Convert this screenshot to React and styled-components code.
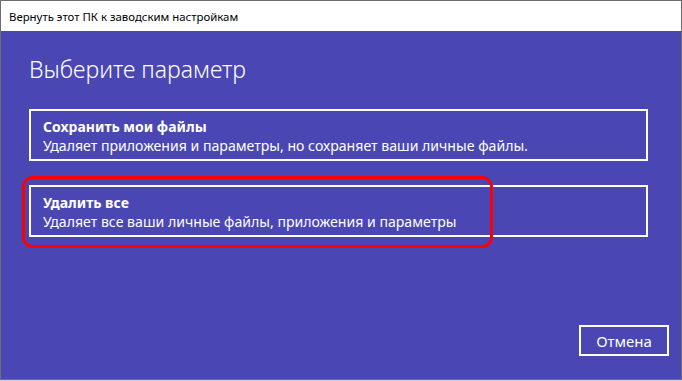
import React from "react";
import styled, { createGlobalStyle } from "styled-components";

const Global = createGlobalStyle`
  html, body { margin: 0; padding: 0; background: #d4d4d4; }
  body { font-family: "Segoe UI", "Noto Sans", "Open Sans", sans-serif; }
`;

const Window = styled.div`
  width: 682px;
  height: 380px;
  box-sizing: border-box;
  border: 1px solid #6f6f6f;
  display: flex;
  flex-direction: column;
  background: #4a47b5;
`;

const TitleBar = styled.div`
  height: 30px;
  flex: none;
  background: #ffffff;
  display: flex;
  align-items: center;
  padding-left: 8px;
  font-size: 11.4px;
  color: #000;
`;

const Content = styled.div`
  flex: 1;
  display: flex;
  flex-direction: column;
  padding: 0 12px 23px 28px;
  color: #fff;
`;

const Heading = styled.h1`
  margin: 22px 0 24px 0;
  font-size: 23px;
  font-weight: 300;
  line-height: 32px;
`;

const Options = styled.div`
  display: flex;
  flex-direction: column;
  gap: 24px;
  margin-right: 21px;
`;

const OptionWrap = styled.div`
  position: relative;
`;

const Option = styled.div`
  height: 52px;
  box-sizing: border-box;
  border: 2px solid #fff;
  padding: 6px 12px 0;
  display: flex;
  flex-direction: column;
`;

const OptionTitle = styled.div`
  font-size: 14px;
  font-weight: 700;
  line-height: 19px;
`;

const OptionDesc = styled.div`
  font-size: 14.1px;
  line-height: 20px;
`;

const Highlight = styled.div`
  position: absolute;
  left: -7px;
  top: -9px;
  width: 471px;
  height: 72px;
  box-sizing: border-box;
  border: 3px solid #ff0000;
  border-radius: 11px;
  pointer-events: none;
`;

const Footer = styled.div`
  margin-top: auto;
  display: flex;
  justify-content: flex-end;
`;

const Button = styled.button`
  width: 90px;
  height: 31px;
  box-sizing: border-box;
  border: 2px solid #fff;
  background: transparent;
  color: #fff;
  font-family: inherit;
  font-size: 15px;
  padding: 0;
`;

export default function App() {
  return (
    <>
      <Global />
      <Window>
        <TitleBar>Вернуть этот ПК к заводским настройкам</TitleBar>
        <Content>
          <Heading>Выберите параметр</Heading>
          <Options>
            <OptionWrap>
              <Option>
                <OptionTitle>Сохранить мои файлы</OptionTitle>
                <OptionDesc>Удаляет приложения и параметры, но сохраняет ваши личные файлы.</OptionDesc>
              </Option>
            </OptionWrap>
            <OptionWrap>
              <Option>
                <OptionTitle>Удалить все</OptionTitle>
                <OptionDesc>Удаляет все ваши личные файлы, приложения и параметры</OptionDesc>
              </Option>
              <Highlight />
            </OptionWrap>
          </Options>
          <Footer>
            <Button>Отмена</Button>
          </Footer>
        </Content>
      </Window>
    </>
  );
}
